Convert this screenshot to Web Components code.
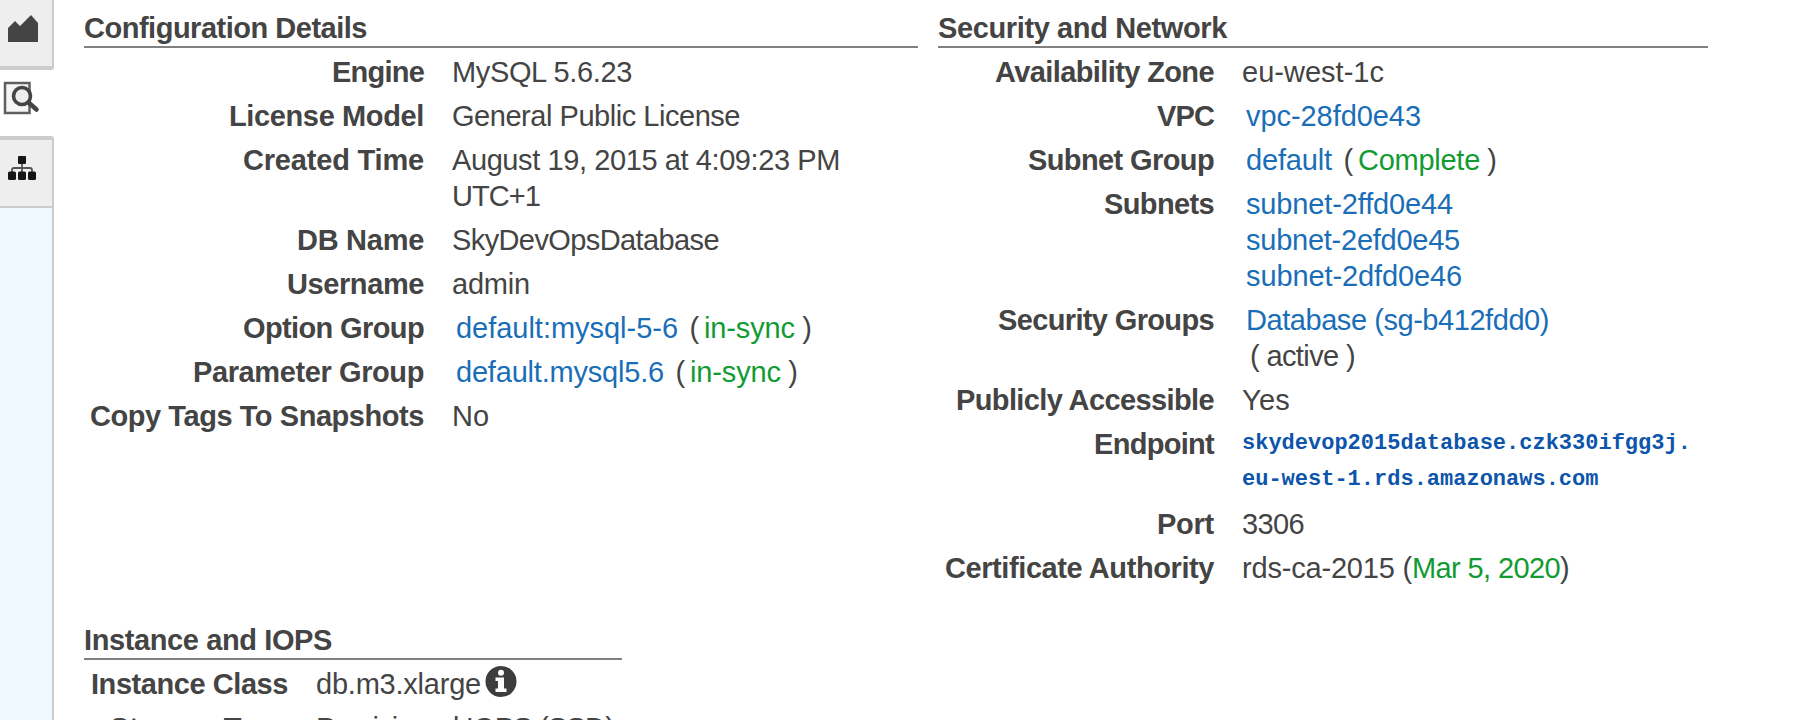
<!DOCTYPE html>
<html lang="en">
<head>
<meta charset="utf-8">
<title>DB Instance</title>
<style>
body { margin: 0; width: 1812px; height: 720px; overflow: hidden; background: #fff; color: #444; font: 29px/36px "Liberation Sans", Arial, sans-serif; }
</style>
</head>
<body>
<rds-details></rds-details>
<script>
// A run of text tracked to a given advance width.
customElements.define('text-run', class extends HTMLElement {
  connectedCallback() {
    const root = this.attachShadow({ mode: 'open' });
    root.innerHTML = `<style>
      :host { display: inline-block; white-space: pre; }
      :host([kind=link]) { color: #1a6eb7; }
      :host([kind=good]) { color: #129b33; }
      :host([kind=mono]) { color: #0d55ab; font: bold 22px/36px "Liberation Mono", "Courier New", monospace; display: block; }
    </style><slot></slot>`;
    const w = parseFloat(this.getAttribute('w'));
    if (w) {
      const natural = this.getBoundingClientRect().width;
      this.style.letterSpacing = ((w - natural) / this.textContent.length) + 'px';
    }
  }
});

customElements.define('detail-row', class extends HTMLElement {
  connectedCallback() {
    this.attachShadow({ mode: 'open' }).innerHTML = `<style>
      :host { display: grid; grid-template-columns: var(--label-width) 1fr; column-gap: 28px; margin-bottom: 8px; }
      .label { font-weight: bold; text-align: right; white-space: nowrap; }
      .value { white-space: nowrap; }
    </style>
    <div class="label"><text-run w="${this.getAttribute('lw')}">${this.getAttribute('label')}</text-run></div>
    <div class="value"><slot></slot></div>`;
  }
});

customElements.define('detail-section', class extends HTMLElement {
  connectedCallback() {
    this.attachShadow({ mode: 'open' }).innerHTML = `<style>
      :host { display: block; }
      h2 { margin: 0 0 6px; padding-bottom: 0; height: 36px; font: inherit; font-weight: bold; border-bottom: 2px solid #808080; }
    </style>
    <h2><text-run w="${this.getAttribute('hw')}">${this.getAttribute('heading')}</text-run></h2>
    <slot></slot>`;
  }
});

customElements.define('info-icon', class extends HTMLElement {
  connectedCallback() {
    this.attachShadow({ mode: 'open' }).innerHTML = `<style>
      :host { display: inline-block; width: 32px; height: 32px; margin-left: 4px; vertical-align: top; }
      svg { display: block; }
    </style>
    <svg width="32" height="32" viewBox="0 0 32 32"><circle cx="16" cy="15.500" r="15.500" fill="#3d3d3d"/>
    <circle cx="16" cy="6.800" r="3" fill="#fff"/><path d="M10.500 11.500H19V22.500H21.500V26H10.500V22.500H13V15H10.500Z" fill="#fff"/></svg>`;
  }
});

customElements.define('side-tabs', class extends HTMLElement {
  connectedCallback() {
    this.attachShadow({ mode: 'open' }).innerHTML = `<style>
      :host { display: flex; flex-direction: column; width: 54px; height: 720px; box-sizing: border-box; }
      .tab { box-sizing: border-box; background: #eee; border-right: 2px solid #ccc; }
      .a { height: 70px; border-bottom: 4px solid #ccc; border-bottom-right-radius: 3px; }
      .b { height: 66px; background: #fff; border-right: 0; }
      .c { height: 72px; border-top: 4px solid #ccc; border-bottom: 2px solid #ccc; border-top-right-radius: 3px; }
      .rest { flex: 1; background: #f0f8ff; border-right: 2px solid #ccc; }
      svg { display: block; }
    </style>
    <div class="tab a"><svg width="52" height="66"><path d="M8 42V28L15 21L20 26L31 15L38 23V42Z" fill="#444"/></svg></div>
    <div class="tab b"><svg width="52" height="66">
      <rect x="5" y="13" width="24.500" height="30" fill="#f5f5f5" stroke="#5f5f5f" stroke-width="2.500"/>
      <path d="M28.500 32.500L36.500 39.500" stroke="#444" stroke-width="4.500" stroke-linecap="round"/>
      <circle cx="22" cy="26" r="8.500" fill="#eee" stroke="#444" stroke-width="3.600"/></svg></div>
    <div class="tab c"><svg width="52" height="66">
      <path d="M22 22V34M12 34V30Q12 28 14 28H30Q32 28 32 30V34" fill="none" stroke="#555" stroke-width="1.800"/>
      <g fill="#151515"><rect x="18" y="16" width="8" height="8" rx="1"/><rect x="8" y="31.500" width="8" height="8.500" rx="1.500"/><rect x="18" y="31.500" width="8" height="8.500" rx="1.500"/><rect x="28" y="31.500" width="8" height="8.500" rx="1.500"/></g></svg></div>
    <div class="rest"></div>`;
  }
});

customElements.define('rds-details', class extends HTMLElement {
  connectedCallback() {
    this.attachShadow({ mode: 'open' }).innerHTML = `<style>
      :host { display: flex; height: 720px; }
      main { margin-left: 30px; padding-top: 10px; }
      .top { display: grid; grid-template-columns: 834px 770px; column-gap: 20px; height: 612px; }
      .left { --label-width: 340px; } .right { --label-width: 276px; } .inst { --label-width: 204px; width: 538px; }
      .pad { margin-left: 4px; } .gap { margin-left: 5px; } .pad2 { margin-left: 8px; }
    </style>
    <side-tabs></side-tabs>
    <main>
      <div class="top">
        <detail-section class="left" heading="Configuration Details" hw="283">
          <detail-row label="Engine" lw="92"><text-run w="180">MySQL 5.6.23</text-run></detail-row>
          <detail-row label="License Model" lw="195"><text-run w="288">General Public License</text-run></detail-row>
          <detail-row label="Created Time" lw="181"><text-run w="388">August 19, 2015 at 4:09:23 PM</text-run><br><text-run w="88">UTC+1</text-run></detail-row>
          <detail-row label="DB Name" lw="127"><text-run w="267">SkyDevOpsDatabase</text-run></detail-row>
          <detail-row label="Username" lw="137"><text-run w="78">admin</text-run></detail-row>
          <detail-row label="Option Group" lw="181"><text-run class="pad" kind="link" w="222">default:mysql-5-6</text-run><text-run class="gap" w="21"> ( </text-run><text-run kind="good" w="91">in-sync</text-run><text-run w="16"> )</text-run></detail-row>
          <detail-row label="Parameter Group" lw="231"><text-run class="pad" kind="link" w="208">default.mysql5.6</text-run><text-run class="gap" w="21"> ( </text-run><text-run kind="good" w="91">in-sync</text-run><text-run w="16"> )</text-run></detail-row>
          <detail-row label="Copy Tags To Snapshots" lw="334"><text-run w="37">No</text-run></detail-row>
        </detail-section>
        <detail-section class="right" heading="Security and Network" hw="289">
          <detail-row label="Availability Zone" lw="219"><text-run w="142">eu-west-1c</text-run></detail-row>
          <detail-row label="VPC" lw="57"><text-run class="pad" kind="link" w="175">vpc-28fd0e43</text-run></detail-row>
          <detail-row label="Subnet Group" lw="186"><text-run class="pad" kind="link" w="86">default</text-run><text-run class="gap" w="21"> ( </text-run><text-run kind="good" w="122">Complete</text-run><text-run w="16"> )</text-run></detail-row>
          <detail-row label="Subnets" lw="110"><text-run class="pad" kind="link" w="207">subnet-2ffd0e44</text-run><br><text-run class="pad" kind="link" w="214">subnet-2efd0e45</text-run><br><text-run class="pad" kind="link" w="216">subnet-2dfd0e46</text-run></detail-row>
          <detail-row label="Security Groups" lw="216"><text-run class="pad" kind="link" w="303">Database (sg-b412fdd0)</text-run><br><text-run class="pad2" w="105">( active )</text-run></detail-row>
          <detail-row label="Publicly Accessible" lw="258"><text-run w="48">Yes</text-run></detail-row>
          <detail-row label="Endpoint" lw="120"><text-run kind="mono">skydevop2015database.czk330ifgg3j.</text-run><text-run kind="mono">eu-west-1.rds.amazonaws.com</text-run></detail-row>
          <detail-row label="Port" lw="57"><text-run w="62">3306</text-run></detail-row>
          <detail-row label="Certificate Authority" lw="269"><text-run w="170">rds-ca-2015 (</text-run><text-run kind="good" w="148">Mar 5, 2020</text-run><text-run w="9">)</text-run></detail-row>
        </detail-section>
      </div>
      <detail-section class="inst" heading="Instance and IOPS" hw="248">
        <detail-row label="Instance Class" lw="197"><text-run w="165">db.m3.xlarge</text-run><info-icon></info-icon></detail-row>
        <detail-row label="Storage Type" lw="178"><text-run w="298">Provisioned IOPS (SSD)</text-run></detail-row>
      </detail-section>
    </main>`;
  }
});
</script>
</body>
</html>
